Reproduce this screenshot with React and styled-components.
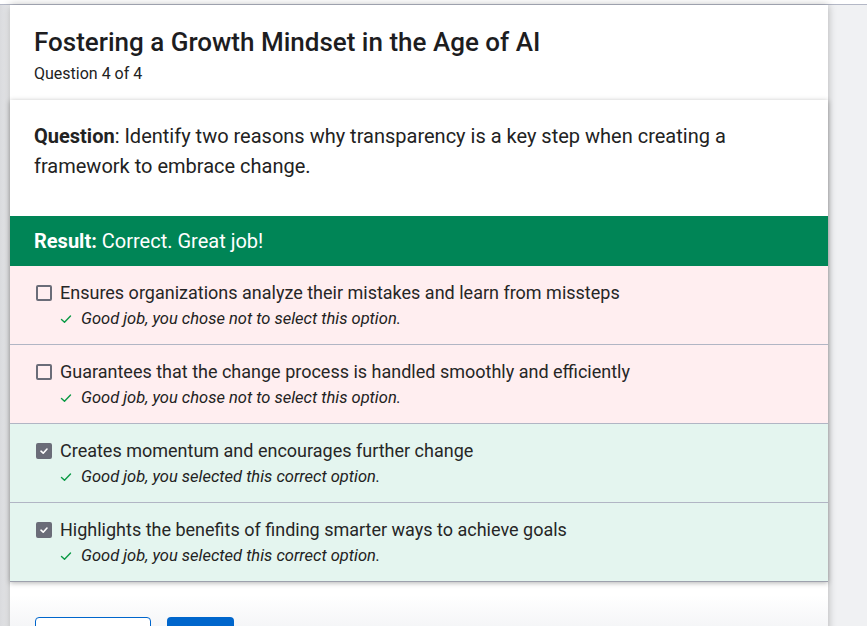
import styled, { createGlobalStyle } from 'styled-components';

const GlobalStyle = createGlobalStyle`
  html, body {
    margin: 0;
    padding: 0;
    background: #f7f8fa;
    font-family: Roboto, "Liberation Sans", sans-serif;
    color: #222;
    overflow: hidden;
  }
`;

const options = [
  { text: 'Ensures organizations analyze their mistakes and learn from missteps', checked: false, feedback: 'Good job, you chose not to select this option.' },
  { text: 'Guarantees that the change process is handled smoothly and efficiently', checked: false, feedback: 'Good job, you chose not to select this option.' },
  { text: 'Creates momentum and encourages further change', checked: true, feedback: 'Good job, you selected this correct option.' },
  { text: 'Highlights the benefits of finding smarter ways to achieve goals', checked: true, feedback: 'Good job, you selected this correct option.' },
];

export default function App() {
  return (
    <>
      <GlobalStyle />
      <TopStrip />
      <Page>
        <Card>
          <Header>
            <Title>Fostering a Growth Mindset in the Age of AI</Title>
            <Subtitle>Question 4 of 4</Subtitle>
          </Header>
          <Panel>
            <QuestionText>
              <b>Question</b>: Identify two reasons why transparency is a key step when creating a framework to embrace change.
            </QuestionText>
            <ResultBar>
              <b>Result:</b> Correct. Great job!
            </ResultBar>
            {options.map((o) => (
              <OptionRow key={o.text} correct={o.checked}>
                <OptionLine>
                  <Box checked={o.checked}>
                    {o.checked && (
                      <svg width="10" height="10" viewBox="0 0 10 10">
                        <path d="M2 5.2 L4.2 7.2 L8 3" fill="none" stroke="#fff" strokeWidth="1.6" strokeLinecap="round" strokeLinejoin="round" />
                      </svg>
                    )}
                  </Box>
                  {o.text}
                </OptionLine>
                <Feedback>
                  <svg width="12" height="10" viewBox="0 0 12 10">
                    <path d="M1.5 5.5 L4.5 8.3 L10.5 2" fill="none" stroke="#0a9a45" strokeWidth="1.4" strokeLinecap="round" strokeLinejoin="round" />
                  </svg>
                  <em>{o.feedback}</em>
                </Feedback>
              </OptionRow>
            ))}
          </Panel>
          <Actions>
            <OutlineButton />
            <PrimaryButton />
          </Actions>
        </Card>
      </Page>
    </>
  );
}

const TopStrip = styled.div`
  height: 4px;
  background: #fff;
  border-bottom: 1px solid #b4b8c6;
`;

const Page = styled.div`
  display: flex;
  padding-left: 10px;
  min-height: 640px;
  background: linear-gradient(90deg, #d9dadd 0, #f0f1f3 10px, #f0f1f3 10px);
`;

const Card = styled.div`
  width: 818px;
  background: linear-gradient(180deg, #fff 0, #fff 590px, #eff0f3 640px);
  box-shadow: 0 0 8px rgba(0, 0, 0, 0.28);
  position: relative;
  z-index: 1;
`;

const Header = styled.div`
  padding: 20px 24px 15px;
`;

const Title = styled.h1`
  margin: 0;
  font-size: 26px;
  line-height: 34px;
  font-weight: 500;
  color: #1d1d1f;
`;

const Subtitle = styled.div`
  font-size: 16px;
  line-height: 22px;
  margin-top: 4px;
  color: #222;
`;

const Panel = styled.div`
  background: #fff;
  box-shadow: 0 1px 5px rgba(0, 0, 0, 0.3);
`;

const QuestionText = styled.p`
  margin: 0;
  padding: 21px 70px 35px 24px;
  font-size: 20px;
  line-height: 30px;
  color: #222;
  b {
    font-weight: 700;
  }
`;

const ResultBar = styled.div`
  background: #008556;
  color: #fff;
  height: 50px;
  display: flex;
  align-items: center;
  gap: 5px;
  padding: 0 24px;
  font-size: 20px;
  b {
    font-weight: 700;
  }
`;

const OptionRow = styled.div`
  background: ${(p) => (p.correct ? '#e4f5ef' : '#ffeef0')};
  padding: 14px 26px 13px;
  border-bottom: 1px solid #b1b5c4;
  &:last-child {
    border-bottom: 1px solid #9da1ad;
  }
`;

const OptionLine = styled.div`
  display: flex;
  align-items: center;
  gap: 8px;
  font-size: 18px;
  line-height: 26px;
  color: #262626;
`;

const Box = styled.span`
  box-sizing: border-box;
  width: 16px;
  height: 16px;
  border-radius: 2px;
  border: 2px solid #6a6c78;
  background: ${(p) => (p.checked ? '#6a6c78' : 'transparent')};
  display: inline-flex;
  align-items: center;
  justify-content: center;
  flex-shrink: 0;
`;

const Feedback = styled.div`
  display: flex;
  align-items: center;
  gap: 9px;
  margin-top: 1px;
  padding-left: 24px;
  font-size: 16.5px;
  line-height: 24px;
  color: #222;
`;

const Actions = styled.div`
  display: flex;
  gap: 16px;
  padding: 35px 24px 0 25px;
`;

const OutlineButton = styled.button`
  width: 116px;
  height: 40px;
  border: 1px solid #0066cc;
  border-radius: 4px;
  background: #fff;
`;

const PrimaryButton = styled.button`
  width: 67px;
  height: 40px;
  border: none;
  border-radius: 4px;
  background: #0066cc;
`;
